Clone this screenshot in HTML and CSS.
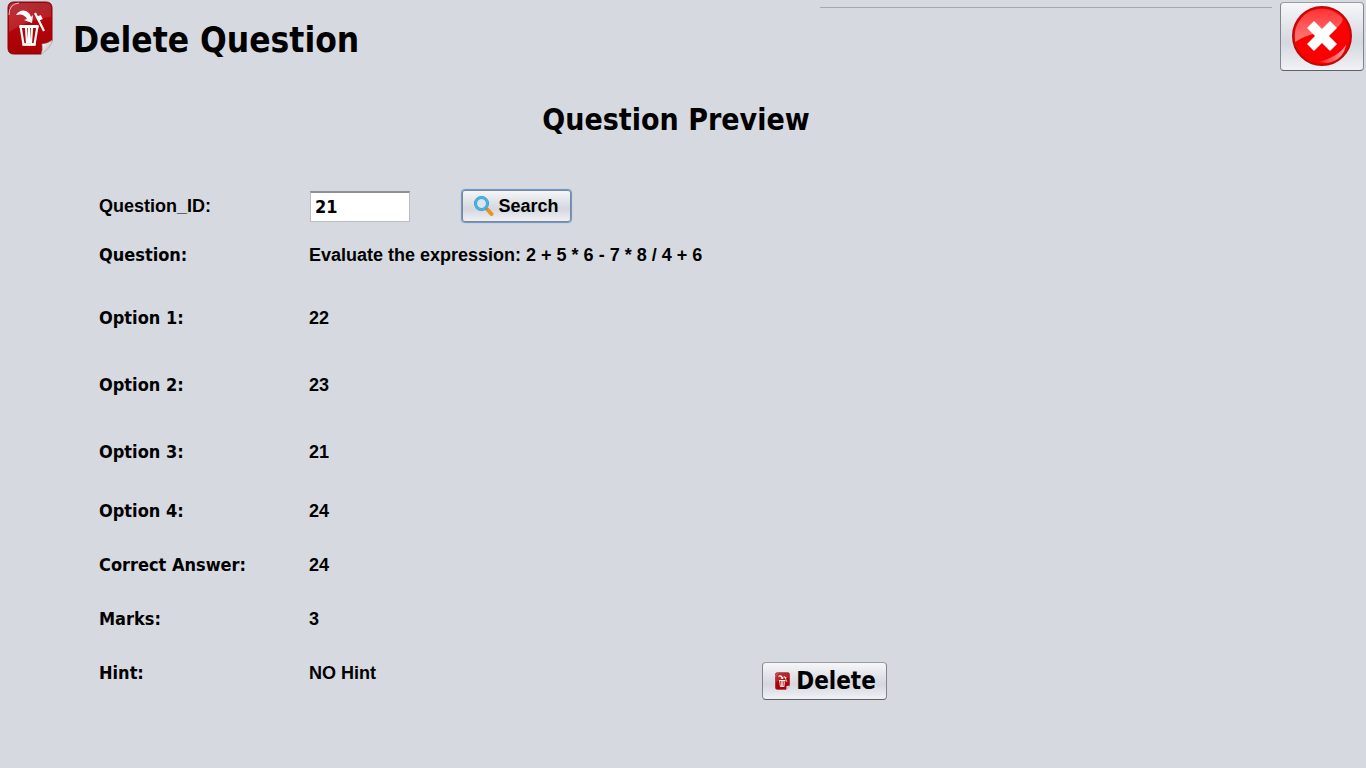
FILE: index.html
```html
<!DOCTYPE html>
<html lang="en">
<head>
<meta charset="utf-8">
<title>Delete Question</title>
<link rel="stylesheet" href="styles.css">
</head>
<body>
<svg class="defs" width="0" height="0" aria-hidden="true">
  <defs>
    <linearGradient id="red" x1="0" y1="0" x2="0" y2="1">
      <stop offset="0" stop-color="#a00a12"/><stop offset=".3" stop-color="#b4060c"/><stop offset="1" stop-color="#a80006"/>
    </linearGradient>
    <linearGradient id="shine" x1="0" y1="0" x2="1" y2="1">
      <stop offset="0" stop-color="#fff" stop-opacity=".18"/><stop offset="1" stop-color="#fff" stop-opacity=".06"/>
    </linearGradient>
    <linearGradient id="fold" x1="0" y1="0" x2="1" y2="1">
      <stop offset="0" stop-color="#fff"/><stop offset=".4" stop-color="#e4e4e4"/><stop offset="1" stop-color="#999"/>
    </linearGradient>
    <symbol id="trash" viewBox="0 0 46 54">
      <path d="M7 1H39Q45 1 45 7V40L34 53H7Q1 53 1 47V7Q1 1 7 1Z" fill="url(#red)" stroke="#8c0208"/>
      <path d="M7 2H39Q44 2 44 7V16Q24 17 2 31V7Q2 2 7 2Z" fill="url(#shine)"/>
      <path d="M2 14Q2 3 12 2" fill="none" stroke="#fff" stroke-opacity=".7"/>
      <path d="M34 53.500Q36 49 35 43Q40 43 45.500 39Q44 47 34 53.500Z" fill="url(#fold)" stroke="#999" stroke-width=".5"/>
      <path d="M9 14Q13 8 19 10Q23 12 24 16L26 14L25 22L17 19L20 18Q17 12 9 14Z" fill="#fff"/>
      <path d="M28 12L37 30" stroke="#fff" stroke-width="2.200"/>
      <path d="M31.500 15L33.500 19" stroke="#fff" stroke-width="5"/>
      <path d="M13.500 25L16.500 43.500H27.500L30.500 25M19 27L20 42M22 27V42M25 27L24 42" fill="none" stroke="#fff" stroke-width="2.200"/>
      <path d="M12.500 25.500H31.500" stroke="#fff" stroke-width="3"/>
      <path d="M15.500 43.500H28.500" stroke="#fff" stroke-width="2.500"/>
    </symbol>
  </defs>
</svg>
<header class="header">
  <svg class="header-icon" aria-hidden="true"><use href="#trash"/></svg>
  <h1 class="title">Delete Question</h1>
  <hr class="rule">
  <button class="button close" type="button" aria-label="Close">
    <svg class="close-icon" viewBox="0 0 60 60" aria-hidden="true">
      <defs>
        <linearGradient id="gloss" x1="0" y1="0" x2="0" y2="1">
          <stop offset="0" stop-color="#f33"/><stop offset="1" stop-color="#ff7d7d"/>
        </linearGradient>
        <linearGradient id="glint" x1="0" y1="0" x2="1" y2="0">
          <stop offset="0" stop-color="#fb2020"/><stop offset="1" stop-color="#ffa0a0"/>
        </linearGradient>
      </defs>
      <circle cx="30" cy="30" r="29" fill="#fb0000" stroke="#c40808" stroke-width="2"/>
      <path d="M3 33A27 27 0 0 1 51 13Q49 22 36 25Q14 28 3 36Z" fill="url(#gloss)"/>
      <path d="M27 56Q46 51 54 39Q51 54 36 57Z" fill="url(#glint)"/>
      <path d="M30 23L38 15L45 22L37 30L45 38L38 45L30 37L22 45L15 38L23 30L15 22L22 15Z" fill="#fff"/>
    </svg>
  </button>
</header>
<main>
  <h2 class="subtitle">Question Preview</h2>
  <form class="preview">
    <div class="row">
      <label class="name plain" for="question-id">Question_ID:</label>
      <div class="lookup">
        <input class="field" id="question-id" type="text" value="21">
        <button class="button search" type="button">
          <svg class="search-icon" viewBox="0 0 20 20" aria-hidden="true">
            <path d="M13.500 13.500L17.500 18" stroke="#ea9420" stroke-width="4" stroke-linecap="round"/>
            <path d="M11 11.500L13 13.500" stroke="#a9866f" stroke-width="2.500"/>
            <circle cx="7.500" cy="7.500" r="6" fill="#dce5ed" stroke="#3597c8" stroke-width="3"/>
            <circle cx="7.500" cy="7.500" r="6" fill="none" stroke="#4fb3e2" stroke-width="1.800"/>
          </svg>
          Search
        </button>
      </div>
    </div>
    <div class="row"><span class="name">Question:</span><output>Evaluate the expression: 2 + 5 * 6 - 7 * 8 / 4 + 6</output></div>
    <div class="row medium"><span class="name">Option 1:</span><output>22</output></div>
    <div class="row tall"><span class="name">Option 2:</span><output>23</output></div>
    <div class="row tall"><span class="name">Option 3:</span><output>21</output></div>
    <div class="row middle"><span class="name">Option 4:</span><output>24</output></div>
    <div class="row short"><span class="name">Correct Answer:</span><output>24</output></div>
    <div class="row short"><span class="name">Marks:</span><output>3</output></div>
    <div class="row short"><span class="name">Hint:</span><output>NO Hint</output></div>
    <div class="actions">
      <button class="button delete" type="button">
        <svg class="delete-icon" aria-hidden="true"><use href="#trash"/></svg>
        Delete
      </button>
    </div>
  </form>
</main>
</body>
</html>
```
FILE: styles.css
```css
* { box-sizing: border-box; }

body {
  margin: 0;
  min-height: 100vh;
  background: #d6d9e0;
  color: #000;
  font: bold 18px/24px "Liberation Sans", Arial, sans-serif;
}

.defs { position: absolute; }

.header {
  display: flex;
  align-items: flex-start;
  padding: 1px 2px 0 7px;
}

.header-icon { width: 46px; height: 54px; flex: none; }

.title,
.subtitle,
.name,
.field,
.delete {
  font-family: "DejaVu Sans Condensed", "Noto Sans", sans-serif;
  font-weight: bold;
}

.title {
  margin: 17px 0 0 20px;
  font-size: 35px;
  line-height: 44px;
  white-space: nowrap;
}

.rule {
  width: 33.3%;
  margin: 6px 8px 0 auto;
  border: 0;
  border-top: 1px solid #a4a8b0;
}

.button {
  display: flex;
  align-items: center;
  justify-content: center;
  padding: 0;
  border: 1px solid;
  border-color: #9a9ca2 #82858b #5c6067;
  border-radius: 4px;
  background: linear-gradient(#f6f7f9, #d9dce2 50%, #d5d8df 60%, #f0f2f6);
  color: #000;
}

.close { width: 84px; height: 69px; margin-top: 1px; padding-bottom: 2px; flex: none; }
.close-icon { width: 60px; height: 60px; }

.subtitle {
  margin: 31px 14px 0 0;
  font-size: 30px;
  line-height: 36px;
  text-align: center;
}

.preview { padding: 51px 99px 0; }

.row {
  display: grid;
  grid-template-columns: 210px 1fr;
  align-items: center;
}

.row + .row { margin-top: 20px; }
.row + .medium { margin-top: 39px; }
.row + .tall { margin-top: 43px; }
.row + .middle { margin-top: 35px; }
.row + .short { margin-top: 30px; }

.plain { font-family: "Liberation Sans", Arial, sans-serif; }

.lookup { display: flex; align-items: center; gap: 51px; padding-left: 1px; }

.field {
  width: 100px;
  height: 31px;
  padding: 0 4px;
  border: 1px solid #b9bcc2;
  border-top: 2px solid #8d8f94;
  background: #fff;
  font-size: 18px;
}

.search {
  width: 111px;
  height: 34px;
  gap: 4px;
  border-color: #6b9bc9;
  box-shadow: inset 0 0 0 1px #7d8796, 0 0 1px #78a6d3;
  font: inherit;
}

.search-icon { width: 20px; height: 20px; }

.actions { display: flex; margin: -23px 0 0 663px; }

.delete {
  width: 125px;
  height: 38px;
  padding-left: 2px;
  gap: 6px;
  font-size: 24px;
}

.delete-icon { width: 15px; height: 18px; }
```
